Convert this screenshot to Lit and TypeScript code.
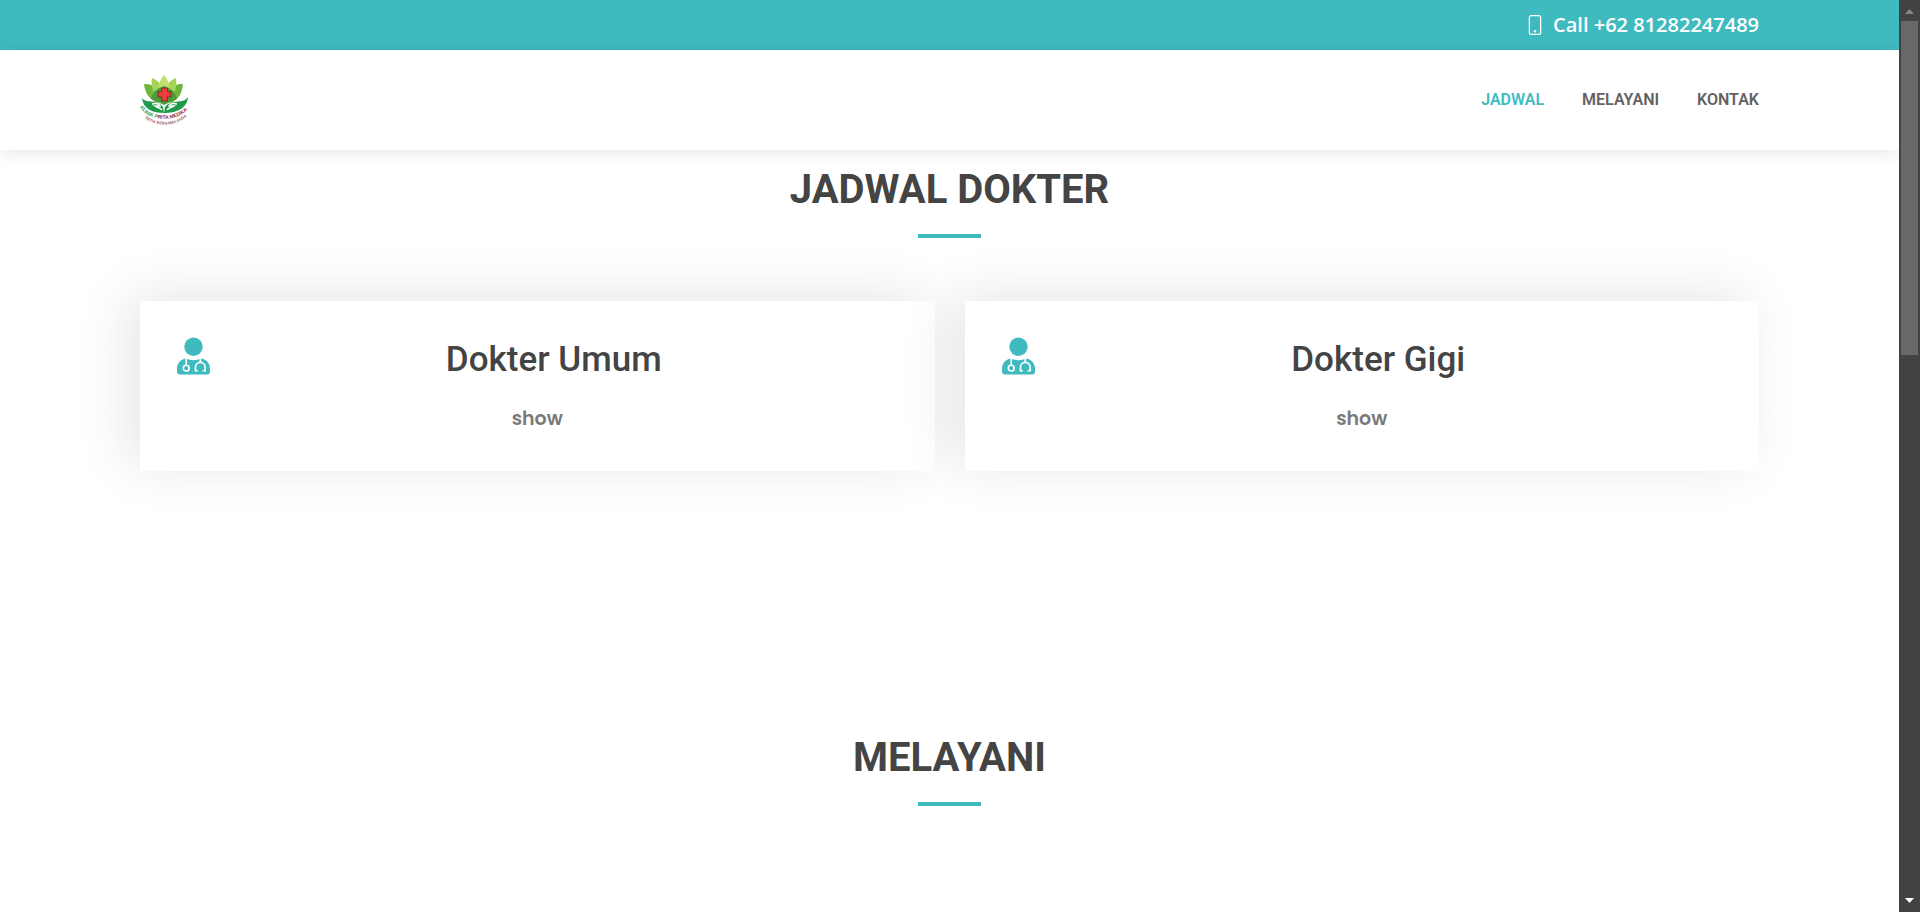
import { LitElement, html, css } from "lit";
import { customElement, property } from "lit/decorators.js";

@customElement("clinic-logo")
class ClinicLogo extends LitElement {
  static styles = css`
    :host { display: block; }
    .logo { display: block; width: 50px; height: 50px; overflow: visible; }
    .name { font: 700 5px "Liberation Sans", sans-serif; }
    .motto { font: 700 4px "Liberation Sans", sans-serif; }
  `;
  render() {
    return html`
      <svg class="logo" viewBox="0 0 50 50" role="img" aria-label="Klinik Prita Medika">
        <defs>
          <linearGradient id="ink" gradientUnits="userSpaceOnUse" x1="0" y1="0" x2="50" y2="0">
            <stop offset=".34" stop-color="#2f9a50" />
            <stop offset=".36" stop-color="#7d2f3a" />
            <stop offset="1" stop-color="#a0303c" />
          </linearGradient>
        </defs>
        <path d="M4 9C12 8 20 14 22 25L17 28C9 24 5 18 4 9Z" fill="#6fb63c" />
        <path d="M43 9C35 8 28 14 26 25L31 28C39 24 42 18 43 9Z" fill="#6fb63c" />
        <path d="M12 3C20 6 25 13 24 24L18 24C12 17 11 10 12 3Z" fill="#a5d45a" />
        <path d="M36 3C28 6 23 13 24 24L30 24C36 17 37 10 36 3Z" fill="#a5d45a" />
        <path d="M24 0C31 8 31 17 24 26C17 17 17 8 24 0Z" fill="#bfe06e" />
        <path d="M11 24Q13 14 24 11Q35 14 37 24Q30 27 24 30Q18 27 11 24Z" fill="#4f9a3a" />
        <path d="M21.500 13H27.500V16.500H31V22H27.500V26H21.500V22H18V16.500H21.500Z" fill="#ea3d3c" stroke="#5a2f28" stroke-width=".8" />
        <path d="M2 23C5 27 10 26 14 27C18 28 21 29 23 32L24 38C13 38 3 34 2 23Z" fill="#1f9a4b" />
        <path d="M48 22C45 27 39 26 35 27C30 28 27 29 25 32L24 38C36 38 47 34 48 22Z" fill="#1f9a4b" />
        <path d="M12 29C16 28 19 29 20 31L15 31C18 33 21 33 22 35M37 29C33 28 30 29 29 31L34 31C31 33 28 33 27 35" fill="none" stroke="#fff" stroke-width="1.500" />
        <path id="arc" d="M0 32C8 48 41 48 50 31" fill="none" />
        <path id="arc2" d="M5 43C15 52 35 52 46 42" fill="none" />
        <text class="name" fill="url(#ink)"><textPath href="#arc">KLINIK PRITA MEDIKA</textPath></text>
        <text class="motto" fill="#9a6a6c"><textPath href="#arc2">SETIA BERSAMA ANDA</textPath></text>
      </svg>
    `;
  }
}

@customElement("doctor-card")
class DoctorCard extends LitElement {
  @property() name = "";
  static styles = css`
    :host {
      display: block;
      position: relative;
      padding: 36px 37px 34px;
      background: #fff;
      box-shadow: -12px -6px 50px rgba(0, 0, 0, 0.1);
    }
    .head { display: flex; align-items: flex-start; }
    .icon { width: 33px; height: 38px; flex: none; }
    .name {
      flex: 1;
      margin: 0;
      text-align: center;
      font: 500 35px/46px Roboto, sans-serif;
      color: #444;
    }
    .show {
      display: block;
      width: 100%;
      margin-top: 18px;
      padding: 0;
      border: 0;
      background: none;
      text-align: center;
      font: 600 19px/36px Poppins, Inter, sans-serif;
      color: #7a7a7a;
      cursor: pointer;
    }
  `;
  render() {
    return html`
      <div class="head">
        <svg class="icon" viewBox="0 0 34 38" aria-hidden="true">
          <circle cx="17" cy="9.500" r="9.500" fill="#3fbbc0" />
          <path d="M9 21.500Q17 25 25 21.500C30.500 22.500 34 26.500 34 32V35Q34 38 31 38H3Q0 38 0 35V32C0 26.500 3.500 22.500 9 21.500Z" fill="#3fbbc0" />
          <path d="M9.500 21V29M24 21V25.500" fill="none" stroke="#fff" stroke-width="1.700" />
          <circle cx="9.500" cy="31.500" r="3" fill="none" stroke="#fff" stroke-width="1.700" />
          <path d="M21.500 34.200H19V30.500a5 5 0 0 1 10 0V34.200H26.500" fill="none" stroke="#fff" stroke-width="1.700" />
        </svg>
        <h3 class="name">${this.name}</h3>
      </div>
      <button class="show" type="button">show</button>
    `;
  }
}

@customElement("app-root")
class AppRoot extends LitElement {
  static styles = css`
    :host {
      display: grid;
      grid-template-columns: minmax(0, 1fr) 21px;
      height: 100vh;
      overflow: hidden;
      background: #fff;
      font-family: "Open Sans", sans-serif;
      color: #444;
    }
    .page { overflow: hidden; }
    .container { margin: 0 140px; }
    .topbar { background: #3fbbc0; color: #fff; }
    .call {
      display: flex;
      align-items: center;
      justify-content: flex-end;
      gap: 8px;
      height: 50px;
      font-size: 20px;
      line-height: 26px;
      font-weight: 600;
    }
    .phone { width: 20px; height: 20px; }
    .header { position: relative; background: #fff; box-shadow: 0 2px 19px rgba(0, 0, 0, 0.1); }
    .bar { display: flex; align-items: center; justify-content: space-between; height: 100px; }
    .nav { display: flex; gap: 38px; }
    .link {
      font: 600 16px/24px Roboto, sans-serif;
      text-transform: uppercase;
      text-decoration: none;
      color: #626262;
    }
    .active { color: #3fbbc0; }
    .section { padding-top: 15px; padding-bottom: 74px; }
    .title {
      display: flex;
      flex-direction: column;
      align-items: center;
      gap: 20px;
      margin: 0 0 63px;
      font: 700 40px/49px Roboto, sans-serif;
      text-transform: uppercase;
    }
    .title::after { content: ""; width: 63px; height: 4px; background: #3fbbc0; }
    .cards { display: grid; grid-template-columns: 1fr 1fr; gap: 30px; margin-bottom: 173px; }
    .scroll { display: flex; flex-direction: column; background: #424242; }
    .arrow { display: block; width: 21px; height: 21px; flex: none; }
    .track { flex: 1; padding: 0 2px; }
    .thumb { height: 38.4%; background: #686868; }
  `;
  render() {
    return html`
      <div class="page">
        <div class="topbar">
          <div class="container call">
            <svg class="phone" viewBox="0 0 16 16" fill="#fff" aria-hidden="true">
              <path d="M11 1a1 1 0 0 1 1 1v12a1 1 0 0 1-1 1H5a1 1 0 0 1-1-1V2a1 1 0 0 1 1-1zM5 0a2 2 0 0 0-2 2v12a2 2 0 0 0 2 2h6a2 2 0 0 0 2-2V2a2 2 0 0 0-2-2z" />
              <path d="M8 14a1 1 0 1 0 0-2 1 1 0 0 0 0 2" />
            </svg>
            <span>Call +62 81282247489</span>
          </div>
        </div>
        <header class="header">
          <div class="container bar">
            <clinic-logo></clinic-logo>
            <nav class="nav">
              <a class="link active" href="#jadwal">Jadwal</a>
              <a class="link" href="#melayani">Melayani</a>
              <a class="link" href="#kontak">Kontak</a>
            </nav>
          </div>
        </header>
        <main>
          <section class="container section" id="jadwal">
            <h2 class="title">Jadwal Dokter</h2>
            <div class="cards">
              <doctor-card name="Dokter Umum"></doctor-card>
              <doctor-card name="Dokter Gigi"></doctor-card>
            </div>
          </section>
          <section class="container section" id="melayani">
            <h2 class="title">Melayani</h2>
          </section>
        </main>
      </div>
      <div class="scroll" aria-hidden="true">
        <svg class="arrow" viewBox="0 0 21 21"><path d="M6 14L10.500 9L15 14Z" fill="#868686" /></svg>
        <div class="track"><div class="thumb"></div></div>
        <svg class="arrow" viewBox="0 0 21 21"><path d="M6 7L10.500 12L15 7Z" fill="#fff" /></svg>
      </div>
    `;
  }
}
